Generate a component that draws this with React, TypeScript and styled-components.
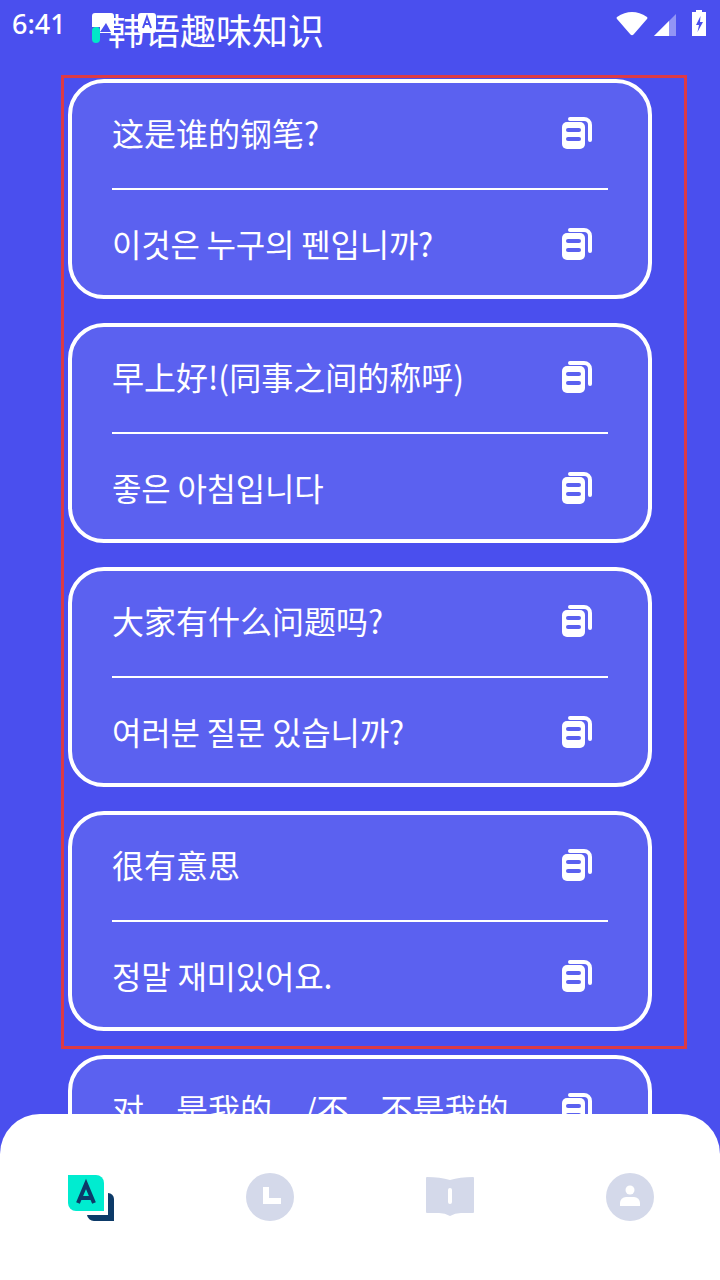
import styled, { createGlobalStyle } from "styled-components";

const GlobalStyle = createGlobalStyle`
    html, body {
        margin: 0;
        padding: 0;
        background: #4a4fee;
    }
`;

const Page = styled.div`
    position: relative;
    width: 720px;
    height: 1280px;
    overflow: hidden;
    background: #4a4fee;
    font-family: "Noto Sans CJK SC", "Noto Sans CJK KR", "Noto Sans", sans-serif;
    color: #fff;
`;

const Header = styled.div`
    display: flex;
    align-items: flex-start;
    height: 79px;
    padding: 0 14px 0 12px;
    box-sizing: border-box;
`;

const Time = styled.div`
    width: 96px;
    margin-top: 5px;
    font-family: "Noto Sans", sans-serif;
    font-size: 27px;
    line-height: 38px;
    font-weight: 500;
`;

const Title = styled.div`
    flex: 1;
    margin-top: 3px;
    font-size: 36px;
    line-height: 52px;
    font-weight: 400;
`;

const StatusIcons = styled.div`
    display: flex;
    align-items: flex-start;
    gap: 6px;
    margin-top: 10px;
`;

const BatteryIcon = styled.svg`
    margin-left: 10px;
`;

const NotifyIcons = styled.div`
    position: absolute;
    left: 92px;
    top: 13px;
    display: flex;
    gap: 24px;
`;

const CardList = styled.div`
    display: flex;
    flex-direction: column;
    gap: 24px;
    width: 584px;
    margin-left: 68px;
`;

const Card = styled.div`
    box-sizing: border-box;
    height: 220px;
    padding: 0 40px;
    flex-shrink: 0;
    background: #5b61f0;
    border: 4px solid #fff;
    border-radius: 36px;
`;

const Row = styled.div<{ $divider?: boolean }>`
    display: flex;
    align-items: center;
    justify-content: space-between;
    height: ${(props) => (props.$divider ? "107px" : "105px")};
    padding: ${(props) => (props.$divider ? "0 16px 6px 0" : "2px 16px 0 0")};
    box-sizing: border-box;
    border-bottom: ${(props) => (props.$divider ? "2px solid #fff" : "none")};
    font-size: 32px;
    font-weight: 400;
    white-space: nowrap;
`;

const RowText = styled.span<{ $korean?: boolean }>`
    margin-bottom: 2px;
    letter-spacing: ${(props) => (props.$korean ? "-0.22px" : "0")};
`;

const Highlight = styled.div`
    position: absolute;
    left: 61px;
    top: 75px;
    width: 626px;
    height: 974px;
    box-sizing: border-box;
    border: 3px solid #dc3a45;
    pointer-events: none;
`;

const BottomNav = styled.div`
    position: absolute;
    left: 0;
    right: 0;
    bottom: 0;
    height: 166px;
    display: grid;
    grid-template-columns: repeat(4, 180px);
    grid-auto-rows: 48px;
    justify-items: center;
    align-items: center;
    padding-top: 59px;
    box-sizing: border-box;
    background: #fff;
    border-radius: 40px 40px 0 0;
`;

function CopyIcon() {
    return (
        <svg width="30" height="32" viewBox="0 0 30 32">
            <path d="M8 2h14a6 6 0 0 1 6 6v15" fill="none" stroke="#fff" strokeWidth="4" strokeLinecap="round" />
            <rect x="-1" y="4" width="25" height="29" rx="6" fill="#5b61f0" />
            <rect x="0" y="5" width="23" height="27" rx="5" fill="#fff" />
            <rect x="4" y="11" width="15" height="4" rx="2" fill="#5b61f0" />
            <rect x="4" y="20" width="15" height="4" rx="2" fill="#5b61f0" />
        </svg>
    );
}

const rows = [
    ["这是谁的钢笔?", "이것은 누구의 펜입니까?"],
    ["早上好!(同事之间的称呼)", "좋은 아침입니다"],
    ["大家有什么问题吗?", "여러분 질문 있습니까?"],
    ["很有意思", "정말 재미있어요."],
    ["对，是我的。/不，不是我的。", "네, 제 것입니다."],
];

function App() {
    return (
        <Page>
            <GlobalStyle />
            <Header>
                <Time>6:41</Time>
                <Title>韩语趣味知识</Title>
                <StatusIcons>
                    <svg width="32" height="26" viewBox="0 0 32 26">
                        <path d="M1 7Q16 -3 31 7Q31.800 8 31 9L17.500 24.500Q16 26 14.500 24.500L1 9Q0.200 8 1 7Z" fill="#fff" />
                    </svg>
                    <svg width="22" height="26" viewBox="0 0 22 26">
                        <path d="M0 26L22 4V26Z" fill="#fff" opacity="0.4" />
                        <path d="M0 26L15 11V26Z" fill="#fff" />
                    </svg>
                    <BatteryIcon width="14" height="26" viewBox="0 0 14 26">
                        <path d="M4 0h6v2h4v24H0V2h4Z" fill="#fff" />
                        <path d="M8.500 6L4 15h3l-1.500 7L11 12H8Z" fill="#4a4fee" />
                    </BatteryIcon>
                </StatusIcons>
            </Header>
            <NotifyIcons>
                <svg width="22" height="30" viewBox="0 0 22 30">
                    <rect x="0" y="14" width="8" height="16" rx="4" fill="#00e8c8" />
                    <path d="M3 0H19a3 3 0 0 1 3 3V20H8V14H0V3a3 3 0 0 1 3-3Z" fill="#fff" />
                    <path d="M2 19L6 14l2 3V19Z" fill="#00e8c8" />
                    <path d="M8 19L14 10l5 9Z" fill="#4a4fee" />
                </svg>
                <svg width="18" height="20" viewBox="0 0 18 20">
                    <rect x="0" y="0" width="18" height="20" rx="3" fill="#fff" />
                    <path d="M5 15L9 4l4 11M6.500 11h5" fill="none" stroke="#4a4fee" strokeWidth="2" />
                </svg>
            </NotifyIcons>
            <CardList>
                {rows.map(([zh, ko]) => (
                    <Card key={zh}>
                        <Row $divider>
                            <RowText>{zh}</RowText>
                            <CopyIcon />
                        </Row>
                        <Row>
                            <RowText $korean>{ko}</RowText>
                            <CopyIcon />
                        </Row>
                    </Card>
                ))}
            </CardList>
            <Highlight />
            <BottomNav>
                <svg width="48" height="48" viewBox="0 0 48 48">
                    <path d="M21 42H42V20a6 6 0 0 1 6 6V48H28a7 7 0 0 1-7-6Z" fill="#0d3a68" />
                    <path d="M2 2H30a8 8 0 0 1 8 8V38H10a8 8 0 0 1-8-8Z" fill="#00ecd0" />
                    <path d="M12 30L20 11l8 19M15 25h10" fill="none" stroke="#0d3a68" strokeWidth="4" />
                </svg>
                <svg width="48" height="48" viewBox="0 0 48 48">
                    <circle cx="24" cy="24" r="24" fill="#d4d9ea" />
                    <path d="M17 14h6v11h12v6H17Z" fill="#fff" />
                </svg>
                <svg width="48" height="40" viewBox="0 0 48 40">
                    <path d="M1 0Q14 0 24 3Q34 0 47 0a1 1 0 0 1 1 1V35a1 1 0 0 1-1 1H35Q29 36 24 39Q19 36 13 36H1a1 1 0 0 1-1-1V1a1 1 0 0 1 1-1Z" fill="#d4d9ea" />
                    <rect x="22" y="11" width="4" height="16" rx="2" fill="#fff" />
                </svg>
                <svg width="48" height="48" viewBox="0 0 48 48">
                    <circle cx="24" cy="24" r="24" fill="#d4d9ea" />
                    <circle cx="24" cy="17" r="4.500" fill="#fff" />
                    <path d="M14 33v-3a6 6 0 0 1 6-6h8a6 6 0 0 1 6 6v3Z" fill="#fff" />
                </svg>
            </BottomNav>
        </Page>
    );
}

export default App;
